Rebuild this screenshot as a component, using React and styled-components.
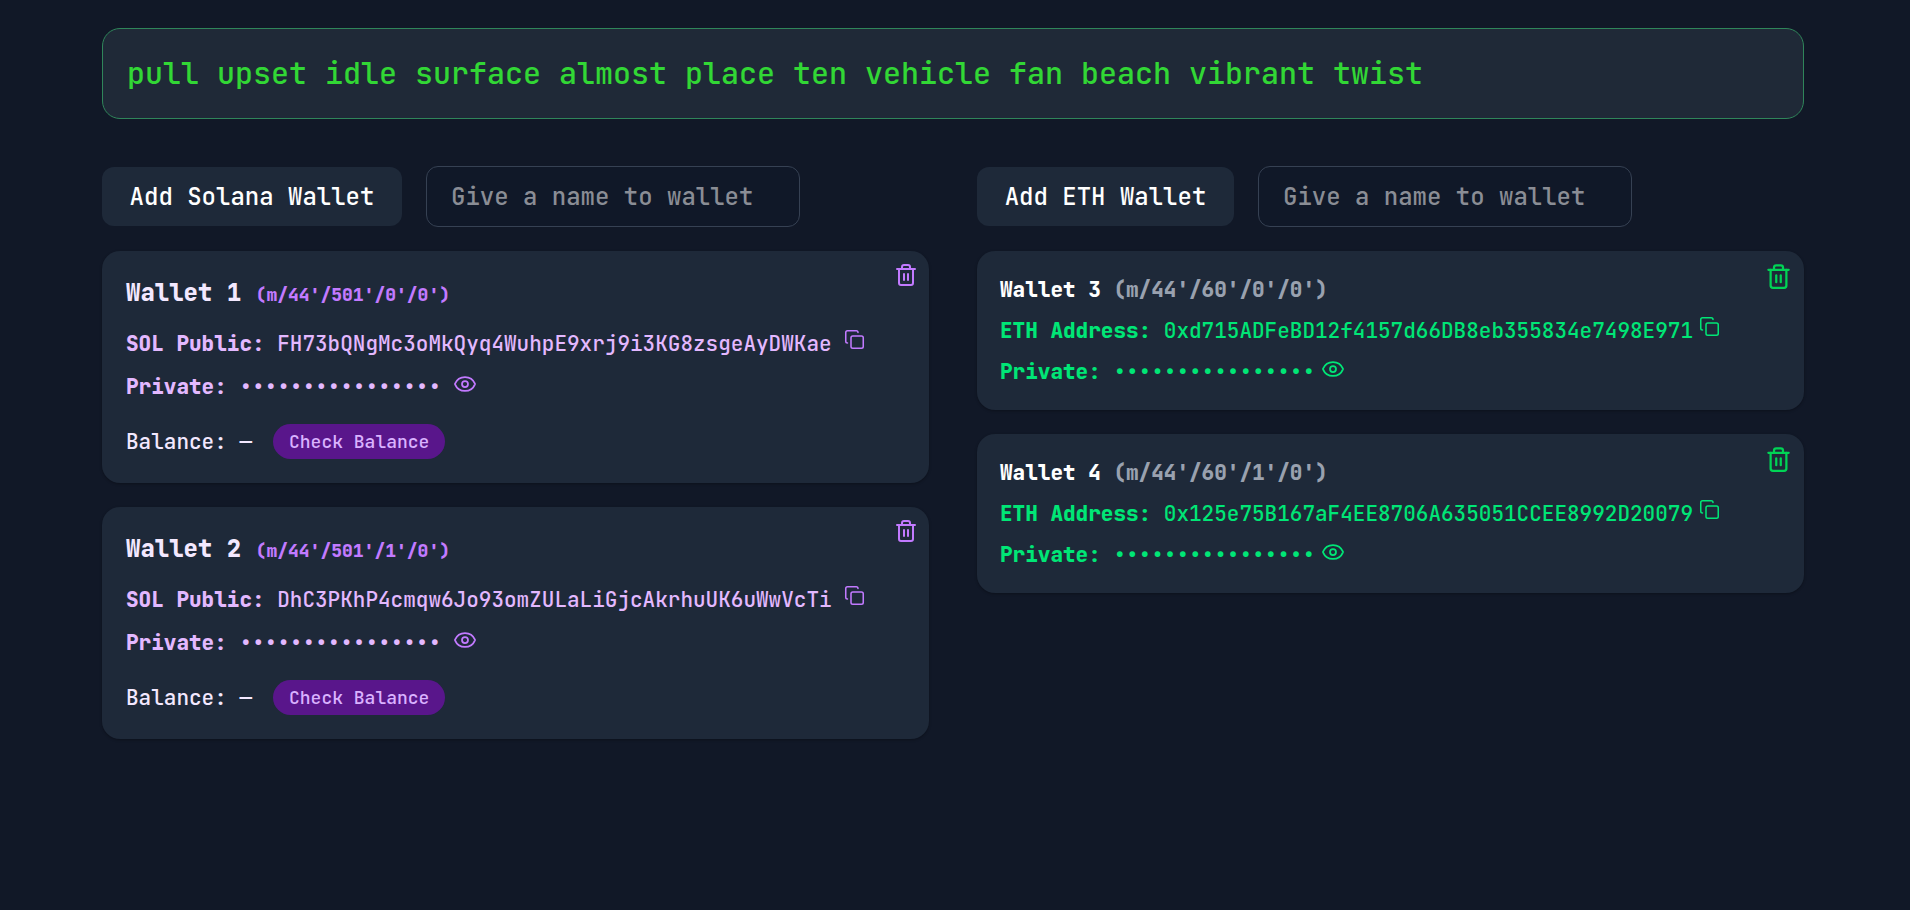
import React from "react";
import styled, { createGlobalStyle } from "styled-components";
import { Copy, Eye, Trash2 } from "lucide-react";

const GlobalStyle = createGlobalStyle`
  *, *::before, *::after { box-sizing: border-box; }
  body {
    margin: 0;
    min-height: 100vh;
    background: #111827;
    color: #ffffff;
    font-family: "JetBrains Mono", "DejaVu Sans Mono", monospace;
    font-size: 21px;
    font-weight: 500;
    line-height: 30px;
  }
  button, input { font: inherit; color: inherit; }
  strong { font-weight: 800; }
`;

const Page = styled.main`
  padding: 28px 106px 48px 102px;
`;

const SeedPhrase = styled.p`
  margin: 0 0 47px;
  padding: 24px;
  border: 1px solid #2f855a;
  border-radius: 18px;
  background: #1f2937;
  color: #32d735;
  font-size: 30px;
  line-height: 41px;
`;

const Columns = styled.div`
  display: grid;
  grid-template-columns: repeat(2, minmax(0, 1fr));
  align-items: start;
  gap: 48px;
`;

const Column = styled.section`
  display: flex;
  flex-direction: column;
  gap: 24px;
`;

const Toolbar = styled.form`
  display: flex;
  align-items: center;
  gap: 24px;
`;

const AddButton = styled.button`
  width: ${(p) => p.$width};
  height: 59px;
  padding: 0;
  border: 0;
  border-radius: 12px;
  background: #1e2939;
  font-size: 24px;
  white-space: nowrap;
  cursor: pointer;
`;

const NameInput = styled.input`
  width: 374px;
  height: 61px;
  padding: 0 24px;
  border: 1px solid #364153;
  border-radius: 12px;
  background: #101828;
  font-size: 24px;

  &::placeholder { color: #8a8d95; opacity: 1; }
`;

const palettes = {
  sol: { name: "#f3e8ff", path: "#c27aff", text: "#e3b8ff", icon: "#c27aff", trash: "#c27aff" },
  eth: { name: "#ffffff", path: "#99a1af", text: "#00e676", icon: "#00e676", trash: "#00d455" },
};

const Card = styled.article`
  position: relative;
  padding: ${(p) => (p.$chain === "sol" ? "24px" : "24px 23px 23px")};
  border-radius: 18px;
  background: #1e2939;
  box-shadow: 0 1px 3px rgba(0, 0, 0, 0.3);
  color: ${(p) => palettes[p.$chain].text};
`;

const WalletName = styled.h2`
  margin: 0 0 ${(p) => (p.$large ? "16px" : "11px")};
  color: ${(p) => palettes[p.$chain].name};
  font-size: ${(p) => (p.$large ? "24px" : "21px")};
  font-weight: 800;
  line-height: ${(p) => (p.$large ? "36px" : "30px")};
`;

const DerivationPath = styled.span`
  color: ${(p) => palettes[p.$chain].path};
  font-size: ${(p) => (p.$chain === "sol" ? "18px" : "21px")};
`;

const KeyList = styled.div`
  display: flex;
  flex-direction: column;
  gap: ${(p) => (p.$chain === "sol" ? "13px" : "11px")};
`;

const KeyRow = styled.div`
  display: flex;
  align-items: flex-start;
  height: 30px;
  white-space: pre;
`;

const MaskedKey = styled.span`
  font-weight: 800;
`;

const IconButton = styled.button`
  display: flex;
  margin: 0 0 0 ${(p) => p.$gap || "0"};
  padding: 0;
  border: 0;
  background: none;
  color: ${(p) => palettes[p.$chain].icon};
  cursor: pointer;
`;

const DeleteButton = styled(IconButton)`
  position: absolute;
  top: 12px;
  right: ${(p) => (p.$chain === "sol" ? "11px" : "12px")};
  color: ${(p) => palettes[p.$chain].trash};
`;

const BalanceRow = styled.div`
  display: flex;
  align-items: center;
  gap: 21px;
  margin-top: 22px;
  color: #f3e8ff;
`;

const BalanceButton = styled.button`
  height: 35px;
  padding: 0 16px;
  border: 0;
  border-radius: 18px;
  background: #59168b;
  color: #dab2ff;
  font-size: 18px;
  line-height: 24px;
  cursor: pointer;
`;

const MASK = "•".repeat(16);

const solanaWallets = [
  { name: "Wallet 1", path: "(m/44'/501'/0'/0')", key: "FH73bQNgMc3oMkQyq4WuhpE9xrj9i3KG8zsgeAyDWKae" },
  { name: "Wallet 2", path: "(m/44'/501'/1'/0')", key: "DhC3PKhP4cmqw6Jo93omZULaLiGjcAkrhuUK6uWwVcTi" },
];

const ethWallets = [
  { name: "Wallet 3", path: "(m/44'/60'/0'/0')", key: "0xd715ADFeBD12f4157d66DB8eb355834e7498E971" },
  { name: "Wallet 4", path: "(m/44'/60'/1'/0')", key: "0x125e75B167aF4EE8706A635051CCEE8992D20079" },
];

function WalletCard({ chain, wallet }) {
  const isSol = chain === "sol";
  const gap = isSol ? "12px" : "6px";
  return (
    <Card $chain={chain}>
      <WalletName $chain={chain} $large={isSol}>
        {wallet.name} <DerivationPath $chain={chain}>{wallet.path}</DerivationPath>
      </WalletName>
      <KeyList $chain={chain}>
        <KeyRow>
          <strong>{isSol ? "SOL Public:" : "ETH Address:"}</strong>
          <span> {wallet.key}</span>
          <IconButton type="button" aria-label="Copy address" $chain={chain} $gap={gap}>
            <Copy size={21} strokeWidth={1.75} />
          </IconButton>
        </KeyRow>
        <KeyRow>
          <strong>Private:</strong>
          <MaskedKey> {MASK}</MaskedKey>
          <IconButton type="button" aria-label="Show private key" $chain={chain} $gap={gap}>
            <Eye size={24} strokeWidth={1.75} />
          </IconButton>
        </KeyRow>
      </KeyList>
      {isSol && (
        <BalanceRow>
          <span>Balance: —</span>
          <BalanceButton type="button">Check Balance</BalanceButton>
        </BalanceRow>
      )}
      <DeleteButton type="button" aria-label={"Delete " + wallet.name} $chain={chain}>
        <Trash2 size={isSol ? 24 : 27} strokeWidth={2} />
      </DeleteButton>
    </Card>
  );
}

function WalletColumn({ chain, label, buttonWidth, wallets }) {
  return (
    <Column>
      <Toolbar onSubmit={(e) => e.preventDefault()}>
        <AddButton type="submit" $width={buttonWidth}>{label}</AddButton>
        <NameInput type="text" aria-label="Wallet name" placeholder="Give a name to wallet" />
      </Toolbar>
      {wallets.map((w) => (
        <WalletCard key={w.name} chain={chain} wallet={w} />
      ))}
    </Column>
  );
}

export default function App() {
  return (
    <>
      <GlobalStyle />
      <Page>
        <SeedPhrase>pull upset idle surface almost place ten vehicle fan beach vibrant twist</SeedPhrase>
        <Columns>
          <WalletColumn chain="sol" label="Add Solana Wallet" buttonWidth="300px" wallets={solanaWallets} />
          <WalletColumn chain="eth" label="Add ETH Wallet" buttonWidth="257px" wallets={ethWallets} />
        </Columns>
      </Page>
    </>
  );
}
